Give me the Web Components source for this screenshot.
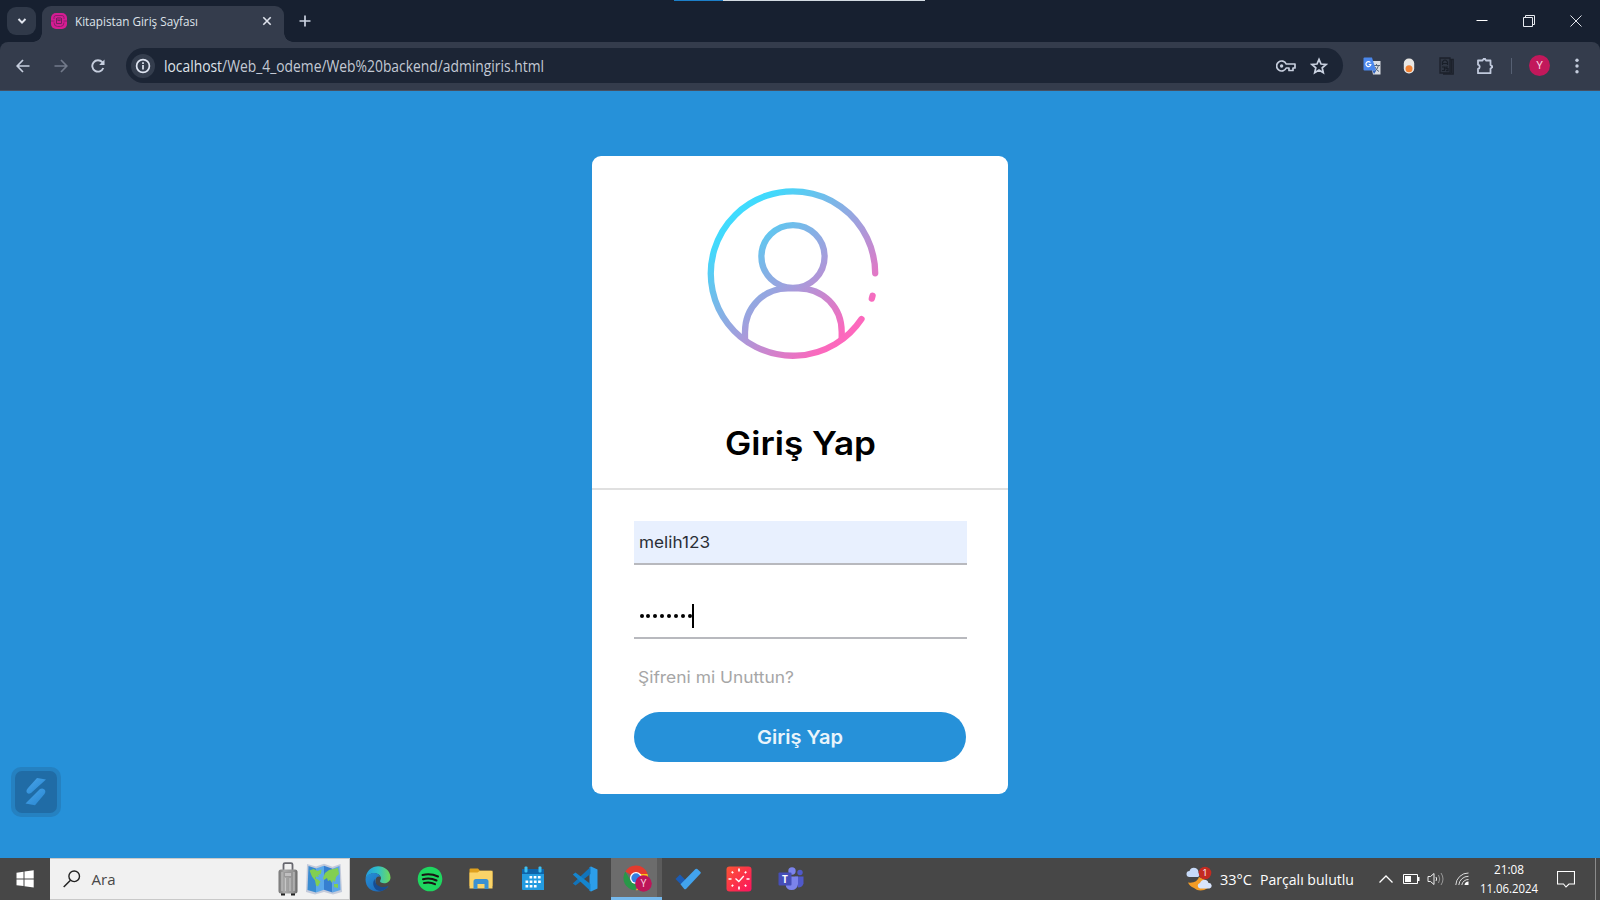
<!DOCTYPE html>
<html lang="tr">
<head>
<meta charset="utf-8">
<title>Kitapistan Giriş Sayfası</title>
<style>
html,body{margin:0;height:100%;overflow:hidden;background:#2691d9}
body{font-family:"Open Sans","Noto Sans",sans-serif}
</style>
</head>
<body>
<app-desktop></app-desktop>
<script>
const ICONS = {
  chevron:['0 0 12 12','<path d="M2.500 4l3.500 3.600L9.500 4" fill="none" stroke="#e1e5ee" stroke-width="2"/>'],
  favicon:['0 0 16 16','<rect width="16" height="16" rx="5" fill="#d51d93"/><path d="M3 6V4.500Q3 2.500 5 2.500h6q2 0 2 2V6M3 9.500q0 4 3.500 4h3q3.500 0 3.500-4M0 8h3.500M12.500 8H16" fill="none" stroke="#8b1c6c" stroke-width="1"/><path d="M5.500 5v5.500h5V5M7 4v4l1-1 1 1V4" fill="none" stroke="#73205f" stroke-width="1"/>'],
  close:['0 0 10 10','<path d="M1.300 1.300l7.400 7.400M8.700 1.300L1.300 8.700" stroke="#dfe3ec" stroke-width="1.600"/>'],
  plus:['0 0 12 12','<path d="M6 .5v11M.5 6h11" stroke="#cbd2e0" stroke-width="1.700"/>'],
  min:['0 0 12 12','<path d="M.5 5.500h11" stroke="#fff" stroke-width="1"/>'],
  restore:['0 0 12 12','<path d="M.5 2.500h9v9h-9zM2.500 2.500V.5h9v9h-2" fill="none" stroke="#e8eaf0" stroke-width="1"/>'],
  winclose:['0 0 12 12','<path d="M.5.5l11 11M11.500.5l-11 11" stroke="#e0e3ea" stroke-width="1"/>'],
  back:['0 0 14 14','<path d="M13.500 7H1.500M7 1L1.200 7 7 13" fill="none" stroke="#c6cede" stroke-width="1.700"/>'],
  fwd:['0 0 14 14','<path d="M.5 7h12M7 1l5.800 6L7 13" fill="none" stroke="#727a8a" stroke-width="1.700"/>'],
  reload:['0 0 14 14','<path d="M12.300 9A5.700 5.700 0 1 1 11.300 3.200L12.600 4.700" fill="none" stroke="#c6cede" stroke-width="1.900"/><path d="M13.500.5v5.400H8.200z" fill="#c6cede"/>'],
  info:['0 0 24 24','<circle cx="12" cy="12" r="12" fill="#343d4d"/><circle cx="12" cy="12" r="6.400" fill="none" stroke="#dfe5f2" stroke-width="1.700"/><path d="M12 11v4.500M12 8.200v1.700" stroke="#dfe5f2" stroke-width="1.700"/>'],
  key:['0 0 20 12','<path d="M10.200 4A5 5 0 1 0 10.200 8H13v2.500h4V8h2V4z" fill="none" stroke="#c6cedd" stroke-width="1.700" stroke-linejoin="round"/><circle cx="5.600" cy="6" r="1.700" fill="#c6cedd"/>'],
  star:['0 0 18 18','<path d="M9 2.300l2 4.700 5 .5-3.800 3.300 1.100 4.900L9 13.100l-4.300 2.600 1.100-4.900L2 7.500l5-.5z" fill="none" stroke="#c9d1e0" stroke-width="1.700"/>'],
  translate:['0 0 18 18','<path d="M7 4h10.500v13.500H10z" fill="#d9dde3"/><path d="M10 8.500h7M13.500 7v1.500M15.500 8.500q-1 4-4 6M12 10q1 3 4 4.500" fill="none" stroke="#57677b" stroke-width="1"/><path d="M1.500.5H9l4 13H1.500Q.5 13.500.5 12.500v-11Q.5.5 1.500.5z" fill="#4a87ec"/><path d="M9.500 13.500h3.800L11 17z" fill="#2f62c0"/><path d="M7.400 5.500A2.500 2.500 0 1 0 7.900 7.500H5.700" fill="none" stroke="#fff" stroke-width="1.200"/>'],
  pill:['0 0 12 16','<rect x=".8" y=".5" width="10.400" height="15" rx="5" fill="#e9e7e4"/><circle cx="6" cy="10.700" r="3.500" fill="#f28234"/>'],
  docs:['0 0 16 18','<path d="M1 1h10v15H1zM11 2.500h3.200V17H4M12.500 3v13" fill="#2f3643" stroke="#1c212b" stroke-width="1.300"/><path d="M3.500 8V5q2.500-4 5 0v3M3.500 6.500h5M3 10h2.500v3.500H3M9 10H7v1.700h2v2H7" stroke="#191f29" stroke-width="1.200" fill="none"/>'],
  puzzle:['0 0 18 18','<path d="M2 3.500h4.500a1.800 1.800 0 0 1 3.500 0h4.500v4.500a1.800 1.800 0 0 1 0 3.500v4.700H2V12a2.200 2.200 0 0 0 0-4.300z" fill="none" stroke="#c0c9dc" stroke-width="1.800" stroke-linejoin="round"/><path d="M7 2.500h2.800V1H7zM15 8.500h2v2.500h-2z" fill="#c0c9dc"/>'],
  more:['0 0 4 16','<circle cx="2" cy="2.300" r="1.700" fill="#c5cddd"/><circle cx="2" cy="8" r="1.700" fill="#c5cddd"/><circle cx="2" cy="13.700" r="1.700" fill="#c5cddd"/>'],
  user:['703 183 180 180','<defs><linearGradient id="g" gradientUnits="userSpaceOnUse" x1="733" y1="213" x2="850" y2="340"><stop offset="0" stop-color="#3fdcff"/><stop offset=".08" stop-color="#43d8fb"/><stop offset=".24" stop-color="#66c3ee"/><stop offset=".55" stop-color="#a49ddc"/><stop offset=".93" stop-color="#fa69bd"/><stop offset="1" stop-color="#ff67bd"/></linearGradient></defs><g fill="none" stroke="url(#g)" stroke-width="6.300" stroke-linecap="round"><path d="M875.200 273.300A82.200 82.200 0 1 0 861.500 319"/><ellipse cx="793" cy="256.500" rx="31.600" ry="31.400"/><path stroke-linecap="butt" d="M745 339V332C745 307 764 288.300 788 288.300H798.500C823 288.300 841.700 307 841.700 332V339"/><path d="M872.600 295.700L871.800 298.600"/></g>'],
  widget:['0 0 50 50','<defs><linearGradient id="w" x1="0" y1="0" x2="1" y2="1"><stop offset="0" stop-color="#4aa5ea"/><stop offset="1" stop-color="#2685d0"/></linearGradient></defs><rect width="50" height="50" rx="10" fill="#2581c1"/><rect x="4" y="4" width="42" height="42" rx="7" fill="#206ca6"/><path d="M26 11l9 1.500L20 26q-3 2-4.500-1Q15 23 17 21z" fill="url(#w)"/><path d="M14.500 36.500L29 22q3-1.500 5 1 1 2-.5 4L24 38.300z" fill="url(#w)"/>'],
  win:['0 0 18 18','<path d="M.5 2.800L7.500 1.800V8.500H.5zM8.500 1.600L17.700.3V8.500H8.500zM.5 9.500h7v6.600L.5 15.200zM8.500 9.500h9.200v8L8.500 16.300z" fill="#fff"/>'],
  search:['0 0 18 18','<circle cx="11.200" cy="6.300" r="5.300" fill="none" stroke="#222" stroke-width="1.400"/><path d="M7.500 10.300L.7 17" stroke="#222" stroke-width="1.500"/>'],
  suitcase:['0 0 20 34','<defs><linearGradient id="s"><stop offset="0" stop-color="#777"/><stop offset=".3" stop-color="#aaa"/><stop offset=".8" stop-color="#929292"/><stop offset="1" stop-color="#676767"/></linearGradient></defs><path d="M5.500 8V2.500Q5.500 1.200 7 1.200h6q1.500 0 1.500 1.300V8" fill="none" stroke="#68686f" stroke-width="1.800"/><path d="M3 31h4v2.500H3zM13 31h4v2.500h-4z" fill="#222"/><rect x=".5" y="7.500" width="19" height="24" rx="2.500" fill="url(#s)"/><path d="M4 10v19M7.500 16v13M12 16v13M16 10v19" stroke="#c6c6c6" stroke-width="1"/><path d="M6.500 10.500h7v4h-7z" fill="#c0bfc0" stroke="#888" stroke-width=".6"/>'],
  map:['0 0 36 32','<path d="M1 1l9 2.500L18 .8l8.500 3L34.500 1 36 29l-9 2.500L18 29l-9 2.500-9-2.500z" fill="#c3cadb"/><path d="M2.500 3L10 5.500v24L1.500 27z" fill="#398bd1"/><path d="M10 5.500l8-2.700v24L10 29.500z" fill="#5ba9ea"/><path d="M18 2.800l8.500 3V29.500L18 26.800z" fill="#367fd0"/><path d="M26.500 5.800L33.500 3l1 24-8 2.500z" fill="#5ba5e8"/><path d="M3.500 7.500l4-1.500 4 2 4-1.500-.5 4-3 2 1 1.500-3-.5-.5 2 2.500 1 2.500 2-2.500 5-2-1-1-5-3-4zM17 15l2-5 4-3 4-1 5-1 1 6-3 3-1 5-2-2-1 3-2-3-2 1-1-3-3 2zM28 21h4v4l-4-1z" fill="#82cf52"/>'],
  edge:['0 0 26 26','<defs><linearGradient id="e" x1="0" x2="1"><stop offset="0" stop-color="#229ce0"/><stop offset=".5" stop-color="#31c0c8"/><stop offset="1" stop-color="#70da57"/></linearGradient><linearGradient id="e2" y2="1"><stop offset="0" stop-color="#2590d8"/><stop offset="1" stop-color="#1c60b0"/></linearGradient></defs><path d="M.6 12.500C2-4.500 25-3 25.500 11.500c0 5-6 7-9.500 5-2-1.200 0-2.500 0-4.500C15.500 6 4 5 .6 12.500z" fill="url(#e)"/><path d="M.5 13C2 6.500 13 4.500 15.500 11c-3-1.500-5.500 1-5 5.500.6 5 7 7.500 13 3.500C18 28.500.5 28 .5 13z" fill="url(#e2)"/><path d="M9.700 13C5.500 19 11 27 18 24.500c2-.6 4-2.500 5.300-4.500C16 23 9.500 19.500 9.700 13z" fill="#174c91"/>'],
  spotify:['0 0 26 26','<circle cx="13" cy="13" r="12.300" fill="#1ed760"/><path d="M5.500 9q8-2 15.500 1.500M6 13.200q7-2 13.500 1.300M7 17q6-1.500 11 1.200" fill="none" stroke="#191414" stroke-width="2" stroke-linecap="round"/>'],
  folder:['0 0 26 26','<path d="M1.500 3.500q0-1 1-1H10l2 2.300h11q1.500 0 1.500 1.500V20h-23z" fill="#dfa11e"/><path d="M1.500 6.500h8l2.500-1.700h12.500v17.700h-23z" fill="#fbd468"/><path d="M5.500 23v-7.500Q5.500 13 8 13h10q2.500 0 2.500 2.500V23h-4v-5h-7v5z" fill="#3a91d2"/>'],
  calendar:['0 0 26 26','<path d="M2 4h22v20H3q-1 0-1-1z" fill="#239be0"/><path d="M2 3h22v5H2z" fill="#0e64a9"/><rect x="4.500" y=".5" width="3" height="6" rx="1" fill="#3bc0f4"/><rect x="18.500" y=".5" width="3" height="6" rx="1" fill="#3bc0f4"/><path d="M9.500 11.300h12.200M5.500 15.800h16.200M5.500 20.200h12.200" stroke="#fff" stroke-width="2.500" stroke-dasharray="2.700 1.500"/>'],
  vscode:['0 0 26 26','<path d="M17.500 1.200L19 .5 25.500 3.500v19L19 25.500l-1.500-.7z" fill="#2c9eea"/><path d="M18.500 1v7L3.500 19.500 .8 17.500z" fill="#1174bb"/><path d="M18.500 25v-7L3.500 6.500.8 8.500z" fill="#1585cd"/>'],
  chrome:['0 0 30 28','<path d="M13 13L2.300 6.500A12.300 12.300 0 0 1 24 7.500L24.500 9H13z" fill="#e33b2e"/><path d="M13 9h11.500A12.300 12.300 0 0 1 13 25.300L18 15z" fill="#fbc116"/><path d="M2.300 6.500L8.500 17q3 3 7 1.500l-3.500 6.800A12.300 12.300 0 0 1 2.300 6.500z" fill="#289848"/><circle cx="13" cy="13" r="6" fill="#fff"/><circle cx="13" cy="13" r="4.700" fill="#347ee2"/><circle cx="20.500" cy="18.500" r="8.300" fill="#bd1559"/><text x="20.500" y="22" text-anchor="middle" font-size="10" fill="#f6c8dc" font-family="Roboto,sans-serif">Y</text>'],
  todo:['0 0 26 26','<path d="M.5 13l4.500-4.500 6.500 6.500L8 20.500z" fill="#1b5cb4"/><path d="M5.500 18.300L20.500 3q1-.7 1.800 0L25.500 6q.6.800 0 1.600L11 23q-1 .6-1.800 0z" fill="#42a3ed"/>'],
  clock:['0 0 26 26','<defs><linearGradient id="c" y2="1"><stop offset="0" stop-color="#fc5434"/><stop offset="1" stop-color="#fb125f"/></linearGradient></defs><rect x=".5" y=".5" width="25" height="25" rx="3" fill="url(#c)"/><path d="M9.500 12.500l3.300 3 5-5.500" fill="none" stroke="#fff" stroke-width="1.300"/><path d="M13 2.500v3M13 20.500v3M2.500 13h3M20.500 13h3M5.700 5.700l1.500 1.500M20.300 5.700l-1.500 1.500M5.700 20.300l1.500-1.500M20.300 20.300l-1.500-1.500" stroke="#fff" stroke-width="1.700"/>'],
  teams:['0 0 26 26','<circle cx="14" cy="5" r="3.700" fill="#7b83eb"/><circle cx="22" cy="6.500" r="2.700" fill="#5059c9"/><path d="M17 10.500h8.500v7q-1 4-5.500 4z" fill="#5059c9"/><path d="M8 10.500h12v7.500q-1 6-6.500 6T7.500 18z" fill="#7b83eb"/><rect x=".5" y="6.500" width="13" height="13" rx="1" fill="#464eb8"/><text x="7" y="16.500" text-anchor="middle" font-size="10" font-weight="700" fill="#fff" font-family="Open Sans,sans-serif">T</text>'],
  weather:['0 0 26 26','<path d="M2 16.500q9 1 11-5.500 11 4 9 11-8 5-14 0-4.500-2-6-5.500z" fill="#f49c25"/><path d="M3.500 11A3 3 0 0 1 3.500 5Q5 .8 9.500 2q3 1 3 4.500 2 3-.5 4.500z" fill="#c7daf8"/><path d="M14 22.500a2.800 2.800 0 0 1 0-5.500q2-4 6-3 2 .5 2.500 3a2.800 2.800 0 0 1 1 5.500z" fill="#d8e4fc"/><circle cx="19" cy="7" r="6.300" fill="#c42b21"/><text x="19" y="10.300" text-anchor="middle" font-size="9.500" fill="#fff" font-family="Open Sans,sans-serif">1</text>'],
  up:['0 0 14 14','<path d="M.5 10.500L7 4l6.500 6.500" fill="none" stroke="#fff" stroke-width="1.300"/>'],
  battery:['0 0 17 12','<path d="M.5 1.500h14v9H.5z" fill="none" stroke="#fff"/><path d="M2 3h6v6H2z" fill="#fff"/><path d="M15 4h1.500v4H15z" fill="#fff"/>'],
  sound:['0 0 18 14','<path d="M1 4.500h2.500L7 1.500v11L3.500 9.500H1z" fill="none" stroke="#eee"/><path d="M9 5q1.300 2 0 4" fill="none" stroke="#eee"/><path d="M11.500 3q2.500 4 0 8M14 1q4 6 0 12" fill="none" stroke="#999"/>'],
  wifi:['0 0 14 14','<path d="M.8 13A12.500 12.500 0 0 1 13.500 1M3.800 13A9.500 9.500 0 0 1 13.500 4.300M6.800 13A6.500 6.500 0 0 1 13.500 7.500" fill="none" stroke="#ddd" stroke-width="1"/><path d="M9.500 13a4 4 0 0 1 4-3.500v3.500z" fill="#fff"/>'],
  note:['0 0 18 18','<path d="M.5 1.500h17v12.500H12L9 17l-2.500-3h-6z" fill="none" stroke="#fff" stroke-width="1.100"/>']
};

class UiIcon extends HTMLElement {
  constructor(){ super(); this.attachShadow({mode:'open'}); }
  connectedCallback(){
    const [box, body] = ICONS[this.getAttribute('name')];
    const p = box.split(' ');
    const w = this.getAttribute('w') || p[2], h = this.getAttribute('h') || p[3];
    this.shadowRoot.innerHTML = `<style>:host{display:block;flex:none;width:${w}px;height:${h}px}svg{display:block}</style>
      <svg width="${w}" height="${h}" viewBox="${box}">${body}</svg>`;
  }
}
customElements.define('ui-icon', UiIcon);

/* Single line of text set to a given measure: by tracking, or by glyph width when "stretch" is present. */
class FitText extends HTMLElement {
  constructor(){
    super();
    this.attachShadow({mode:'open'}).innerHTML = `<style>:host{display:block;flex:none;white-space:pre;text-align:left}span{display:inline-block;transform-origin:0 50%}</style><span><slot></slot></span>`;
  }
  connectedCallback(){
    const fit = () => {
      const span = this.shadowRoot.querySelector('span');
      const want = +this.getAttribute('measure');
      span.style.letterSpacing = '0px';
      span.style.transform = 'none';
      const natural = span.getBoundingClientRect().width;
      if (this.hasAttribute('stretch')) span.style.transform = `scaleX(${(want / natural).toFixed(4)})`;
      else span.style.letterSpacing = ((want - natural) / this.textContent.length).toFixed(3) + 'px';
    };
    this.style.width = this.getAttribute('measure') + 'px';
    fit();
    requestAnimationFrame(fit);
  }
}
customElements.define('fit-text', FitText);

const define = (name, html) => customElements.define(name, class extends HTMLElement {
  constructor(){ super(); this.attachShadow({mode:'open'}).innerHTML = html; }
});

define('tab-strip', `<style>
:host{display:flex;box-sizing:border-box;height:42px;background:#172030;padding-left:7px;position:relative}
.drop{width:29px;height:28px;margin-top:7px;border-radius:9px;background:#303949;display:grid;place-items:center}
.tab{box-sizing:border-box;margin:6px 0 0 6px;width:242px;height:36px;background:#343c4c;border-radius:9px 9px 0 0;display:flex;align-items:center;padding:0 12px 6px 9px;position:relative}
.tab:before,.tab:after{content:"";position:absolute;bottom:0;width:9px;height:9px}
.tab:before{left:-9px;background:radial-gradient(circle at 0 0,transparent 8.500px,#343c4c 9px)}
.tab:after{right:-9px;background:radial-gradient(circle at 100% 0,transparent 8.500px,#343c4c 9px)}
fit-text{margin:1px 0 0 8px;font-size:12.500px;color:#dfe3ea;line-height:16px}
.x{margin-left:auto}
.plus{margin:15px 0 0 14.500px}
.win{margin:15px 18px 0 auto;display:flex;gap:35px}
.peek{position:absolute;left:674px;top:0;width:251px;height:1px;background:linear-gradient(90deg,#1c7fc8 49px,#d3dbe2 49px)}
</style><div class="drop"><ui-icon name="chevron"></ui-icon></div>
<div class="tab"><ui-icon name="favicon"></ui-icon><fit-text stretch measure="123">Kitapistan Giriş Sayfası</fit-text><ui-icon class="x" name="close"></ui-icon></div>
<ui-icon class="plus" name="plus"></ui-icon>
<div class="win"><ui-icon name="min"></ui-icon><ui-icon name="restore"></ui-icon><ui-icon name="winclose"></ui-icon></div><div class="peek"></div>`);

define('nav-bar', `<style>
:host{display:block;height:49px;background:#172030}
.bar{box-sizing:border-box;height:49px;background:#343c4c;border-radius:8px 8px 0 0;border-bottom:1px solid #465062;display:flex;align-items:center;padding:0 21px 1px 16px}
.nav{display:flex;gap:23.500px;width:110px}
.omni{box-sizing:border-box;width:1217px;height:35px;border-radius:18px;background:#1c2535;display:flex;align-items:center;padding:0 15px 0 5px}
fit-text{font-size:15.500px;line-height:20px;color:#c3c9d4;margin:1px 0 0 8.500px}
fit-text b{font-weight:400;color:#dfe3ea}
.key{margin-left:auto}.star{margin-left:14px}
.ext{display:flex;align-items:center;margin-left:19.500px;flex:1}
.sep{width:1px;height:16px;background:#566073;margin-left:17.500px}
.me{width:21px;height:21px;border-radius:50%;background:#c2185b;color:#f8d3e0;font:11px/21px Roboto,sans-serif;text-align:center;margin-left:17px}
</style><div class="bar"><div class="nav"><ui-icon name="back"></ui-icon><ui-icon name="fwd"></ui-icon><ui-icon name="reload"></ui-icon></div>
<div class="omni"><ui-icon name="info"></ui-icon><fit-text stretch measure="380"><b>localhost</b>/Web_4_odeme/Web%20backend/admingiris.html</fit-text><ui-icon class="key" name="key"></ui-icon><ui-icon class="star" name="star"></ui-icon></div>
<div class="ext"><ui-icon name="translate"></ui-icon><ui-icon name="pill" style="margin-left:22.500px"></ui-icon><ui-icon name="docs" style="margin-left:24px"></ui-icon><ui-icon name="puzzle" style="margin-left:20.500px"></ui-icon><div class="sep"></div><div class="me">Y</div><ui-icon name="more" style="margin-left:auto"></ui-icon></div></div>`);

define('login-field', `<style>
:host{display:flex;box-sizing:border-box;width:333px;height:44px;border-bottom:2px solid #b8b9be;margin-left:.5px;padding-left:5px;align-items:center}
:host([filled]){background:#e8f0fe}
</style><slot></slot>`);

define('login-card', `<style>
:host{display:block;width:416px;height:638px;background:#fff;border-radius:9px;font-family:Inter,"Open Sans",sans-serif}
header{box-sizing:border-box;height:334px;border-bottom:2px solid #e0e0e0;padding-top:27px}
header ui-icon{margin-left:111px}
h1{margin:59px 0 0;font-size:32.500px;line-height:44px;font-weight:600;color:#000;display:flex;justify-content:center}
form{padding:31px 41px 0}
login-field fit-text{font-size:16.500px;line-height:22px;color:#2a2e36}
login-field+login-field{margin-top:30px}
.dots{display:flex;gap:2.900px;padding-left:1px;margin-top:-1px}
.dots i{width:4px;height:4px;border-radius:50%;background:#000}
.caret{width:2px;height:24px;background:#000;margin:-1px 0 0}
.forgot{margin:26px 0 0 5px;font-size:16.500px;line-height:24px;color:#a6a6a6}
button{display:flex;justify-content:center;align-items:center;margin:23px auto 0;width:332px;height:50px;border:0;border-radius:25px;background:#2691d9;color:#e9f4fb;padding:0;font:600 18.500px/24px Inter,sans-serif}
</style><header><ui-icon name="user"></ui-icon><h1><fit-text stretch measure="151">Giriş Yap</fit-text></h1></header>
<form><login-field filled><fit-text stretch measure="71">melih123</fit-text></login-field>
<login-field><span class="dots"><i></i><i></i><i></i><i></i><i></i><i></i><i></i><i></i></span><span class="caret"></span></login-field>
<div class="forgot"><fit-text stretch measure="156">Şifreni mi Unuttun?</fit-text></div>
<button type="button"><fit-text stretch measure="86">Giriş Yap</fit-text></button></form>`);

define('page-view', `<style>
:host{display:flex;justify-content:center;align-items:flex-start;box-sizing:border-box;height:767px;padding-top:65px;background:#2691d9;position:relative}
.float{position:absolute;left:11px;bottom:41px}
</style><login-card></login-card><ui-icon class="float" name="widget"></ui-icon>`);

define('task-bar', `<style>
:host{display:flex;height:42px;background:#474747;color:#fff}
.start{width:50px;display:grid;place-items:center}
.search{box-sizing:border-box;width:300px;background:#f1f1f1;border:1px solid #c9c9c9;border-left:0;display:flex;align-items:center;padding:0 7px 0 12.500px}
.search fit-text{font-size:15px;line-height:20px;color:#484848;margin-left:11px}
.apps{display:grid;grid-template-columns:repeat(9,51.600px);margin-left:2.500px}
.apps div{display:grid;place-items:center}
.apps .on{width:51px;margin-left:1px;background:linear-gradient(90deg,#6c6c6c 46px,#5b5b5b 46px);box-shadow:inset 0 -3px #76b9ed;box-sizing:border-box;padding-left:3px}
.tray{display:flex;align-items:center;margin-left:auto}
.tray fit-text{font-size:14.500px;line-height:20px;margin-top:1px}
.time{width:70px;display:flex;flex-direction:column;align-items:center;margin-left:5px}
.time fit-text{font-size:12.500px;line-height:19px;margin-top:0}
.edge{width:1px;height:42px;background:#8b8b8b;margin:0 4px 0 20px}
</style><div class="start"><ui-icon name="win"></ui-icon></div>
<div class="search"><ui-icon name="search"></ui-icon><fit-text measure="24">Ara</fit-text><ui-icon name="suitcase" style="margin-left:auto"></ui-icon><ui-icon name="map" style="margin-left:8px"></ui-icon></div>
<div class="apps"><div><ui-icon name="edge"></ui-icon></div><div><ui-icon name="spotify"></ui-icon></div><div><ui-icon name="folder"></ui-icon></div><div><ui-icon name="calendar"></ui-icon></div><div><ui-icon name="vscode"></ui-icon></div><div class="on"><ui-icon name="chrome"></ui-icon></div><div><ui-icon name="todo"></ui-icon></div><div><ui-icon name="clock"></ui-icon></div><div><ui-icon name="teams"></ui-icon></div></div>
<div class="tray"><ui-icon name="weather"></ui-icon><fit-text stretch measure="32" style="margin-left:8px">33°C</fit-text><fit-text stretch measure="94" style="margin-left:8px">Parçalı bulutlu</fit-text><ui-icon name="up" style="margin-left:25px"></ui-icon><ui-icon name="battery" style="margin-left:10px"></ui-icon><ui-icon name="sound" style="margin-left:7px"></ui-icon><ui-icon name="wifi" style="margin-left:10px"></ui-icon>
<div class="time"><fit-text stretch measure="30">21:08</fit-text><fit-text stretch measure="58">11.06.2024</fit-text></div><ui-icon name="note" style="margin-left:13px"></ui-icon><div class="edge"></div></div>`);

define('app-desktop', `<style>:host{display:block;width:1600px;height:900px;overflow:hidden}</style>
<tab-strip></tab-strip><nav-bar></nav-bar><page-view></page-view><task-bar></task-bar>`);
</script>
</body>
</html>
